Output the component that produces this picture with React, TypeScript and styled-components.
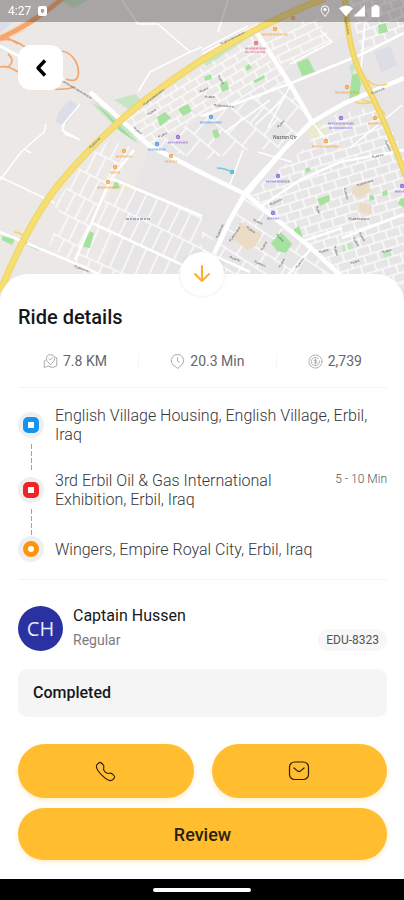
import React from "react";
import styled, { createGlobalStyle } from "styled-components";

const GlobalStyle = createGlobalStyle`
  *, *::before, *::after { box-sizing: border-box; }
  body {
    margin: 0;
    background: #fff;
    color: #16171b;
    font-family: Roboto, "Liberation Sans", sans-serif;
  }
  h1, h2, p, ul, ol { margin: 0; padding: 0; }
  ul, ol { list-style: none; }
  button { font-family: inherit; border: 0; padding: 0; cursor: pointer; }
`;

const Screen = styled.div`
  display: flex;
  flex-direction: column;
  min-height: 100vh;
`;

const Hero = styled.header`
  position: relative;
  height: 304px;
  overflow: hidden;
  background: #ebe8e6;
`;

const MapSvg = styled.svg`
  position: absolute;
  inset: 0;
  width: 100%;
  height: 100%;
`;

const StatusBar = styled.div`
  position: relative;
  display: flex;
  align-items: center;
  gap: 7px;
  height: 22px;
  padding: 0 24px 0 8px;
  background: rgba(70, 66, 68, 0.4);
  color: #fff;
  font-size: 12px;
`;

const StatusIcons = styled.div`
  display: flex;
  align-items: center;
  gap: 9px;
  margin-left: auto;
`;

const BackButton = styled.button`
  position: relative;
  display: grid;
  place-items: center;
  width: 45px;
  height: 45px;
  margin: 23px 18px 0;
  border-radius: 13px;
  background: #fff;
`;

const Sheet = styled.main`
  position: relative;
  flex: 1;
  display: flex;
  flex-direction: column;
  margin-top: -30px;
  padding: 31px 17px 19px 18px;
  border-radius: 28px 28px 0 0;
  background: #fff;
`;

const CollapseButton = styled.button`
  position: absolute;
  top: -22px;
  left: 50%;
  display: grid;
  place-items: center;
  width: 44px;
  height: 44px;
  margin-left: -22px;
  border-radius: 50%;
  background: #fff;
  box-shadow: 0 0 4px rgba(0, 0, 0, 0.09);
`;

const Title = styled.h1`
  font-size: 20px;
  line-height: 24px;
  font-weight: 500;
`;

const Stats = styled.ul`
  display: flex;
  align-items: center;
  justify-content: space-between;
  margin-top: 20px;
  padding: 0 25px 14px;
  border-bottom: 1px solid #f4f4f4;
`;

const Stat = styled.li`
  display: flex;
  align-items: center;
  gap: 5px;
  color: #66676a;
  font-size: 14px;
  line-height: 24px;
`;

const StatDivider = styled.li`
  width: 1px;
  height: 16px;
  background: #f6f6f6;
`;

const Route = styled.ol`
  padding: 18px 0 17px;
  border-bottom: 1px solid #f4f4f4;
`;

const Stop = styled.li`
  display: grid;
  grid-template-columns: 26px 1fr auto;
  column-gap: 11px;
  align-items: center;
`;

const tones = { blue: "#1593ef", red: "#ee2427", orange: "#fb950b" };

const Marker = styled.span<{ $tone: keyof typeof tones; $round?: boolean }>`
  display: grid;
  place-items: center;
  width: 26px;
  height: 26px;
  border-radius: 50%;
  background: #efeff0;
  &::before {
    content: "";
    width: 16px;
    height: 16px;
    border: 5px solid ${(p) => tones[p.$tone]};
    border-radius: ${(p) => (p.$round ? "50%" : "5px")};
    background: #fff;
  }
`;

const Address = styled.p`
  color: #35363a;
  font-size: 16px;
  line-height: 19px;
  font-weight: 300;
`;

const Wait = styled.span`
  align-self: start;
  padding-top: 1px;
  color: #55565a;
  font-size: 12px;
  line-height: 14px;
  font-weight: 300;
`;

const Connector = styled.span`
  justify-self: center;
  width: 1px;
  height: 27px;
  background: repeating-linear-gradient(#a2a2a4 0 5px, transparent 5px 7px);
`;

const Driver = styled.section`
  display: flex;
  align-items: center;
  gap: 10px;
  margin-top: 26px;
`;

const Avatar = styled.div`
  display: grid;
  place-items: center;
  width: 45px;
  height: 45px;
  border-radius: 50%;
  background: #2932a0;
  color: #e9eafb;
  font-family: "Open Sans", sans-serif;
  font-size: 20px;
`;

const DriverInfo = styled.div`
  flex: 1;
`;

const DriverName = styled.h2`
  font-size: 16px;
  line-height: 19px;
  font-weight: 400;
`;

const DriverRow = styled.div`
  display: flex;
  align-items: center;
  justify-content: space-between;
  height: 22px;
  margin-top: 4px;
  color: #7b7c7f;
  font-size: 14px;
`;

const Plate = styled.span`
  padding: 0 8px;
  border-radius: 11px;
  background: #f7f7f7;
  color: #535457;
  font-size: 12px;
  line-height: 22px;
`;

const State = styled.p`
  margin-top: 18px;
  padding: 0 15px;
  border-radius: 9px;
  background: #f5f5f5;
  font-size: 16px;
  line-height: 48px;
  font-weight: 500;
`;

const Actions = styled.div`
  display: grid;
  grid-template-columns: 1fr 1fr;
  gap: 10px 18px;
  margin-top: 27px;
`;

const ActionButton = styled.button<{ $wide?: boolean }>`
  display: grid;
  place-items: center;
  grid-column: ${(p) => (p.$wide ? "1 / -1" : "auto")};
  height: ${(p) => (p.$wide ? 52 : 54)}px;
  border-radius: 27px;
  background: #ffbd2f;
  color: #2c210d;
  box-shadow: 0 2px 5px rgba(255, 189, 47, 0.28);
  font-size: 18px;
  font-weight: 500;
`;

const NavBar = styled.footer`
  display: grid;
  place-items: center;
  height: 21px;
  background: #000;
  &::before {
    content: "";
    width: 98px;
    height: 4px;
    border-radius: 2px;
    background: #fff;
  }
`;

/* Neighbourhoods: an outline filled with a rotated street pattern. */
const blocks = [
  { id: "a", w: 15, h: 8, rot: -31, d: "M138 108 252 36 290 86 202 116 150 146 124 118Z" },
  { id: "b", w: 11, h: 23, rot: 27, d: "M86 158 110 140 132 148 92 222 74 264 49 246 60 212 54 206Z" },
  { id: "c", w: 12, h: 27, rot: 26, d: "M114 181 202 217 202 275 92 223Z" },
  { id: "d", w: 13, h: 40, rot: 24, d: "M92 223 202 275 76 275 76 260Z" },
  { id: "e", w: 14, h: 9, rot: -17, d: "M300 152 330 116 375 105 404 150 404 285 342 275 250 193Z" },
  { id: "f", w: 18, h: 22, rot: 40, d: "M150 146 202 116 290 86 312 122 285 148 250 150 202 160Z" },
  { id: "g", w: 24, h: 17, rot: 33, d: "M246 196 342 280 212 280 215 252Z" },
  { id: "h", w: 24, h: 8, rot: -25, d: "M262 38 315 14 333 42 285 70Z" },
  { id: "i", w: 12, h: 9, rot: -20, d: "M350 0 404 0 404 32 360 52Z" },
  { id: "j", w: 22, h: 30, rot: 32, d: "M202 220 215 225 212 252 202 250Z" },
];

const parks = [
  "M157 117 165 112 171 118 160 126Z", "M178 109 188 104 192 111 183 116Z",
  "M297 63 308 58 315 72 302 76Z", "M245 67 249 64 252 68 247 71Z",
  "M352 75 358 73 361 83 359 96 349 100Z", "M378 25 386 23 388 32 379 34Z",
  "M212 131 217 129 220 136 215 139Z", "M220 84 227 81 229 89 222 92Z",
  "M204 77 211 74 212 79 205 81Z", "M253 81 264 75 265 78 255 83Z",
  "M271 243 281 232 292 244 286 253 277 251Z", "M317 199 329 195 330 201 320 206Z",
  "M293 230 299 226 303 238 296 234Z", "M305 169 309 167 311 171 306 173Z",
  "M369 196 373 195 375 199 370 201Z", "M382 192 387 190 388 195 383 196Z",
  "M400 199 404 198 404 208 398 204Z", "M85 240 89 231 94 233 90 248 83 247Z",
  "M114 183 117 180 120 188 113 189Z", "M2 236 15 239 12 245 2 240Z",
];

const palePark = [
  "M114 100 135 94 145 104 133 112Z", "M60 0 88 0 74 8Z",
  "M342 246 352 242 354 250 343 253Z", "M383 252 392 249 394 257 384 260Z",
  "M355 68 353 63 349 67 352 75Z", "M90 102 122 118 138 143 121 132Z",
  "M202 57 262 26 255 34 206 66Z", "M22 243 42 247 38 251Z",
];

const outline =
  "M0 177 55 203M0 180 22 151 44 132 46 124M24 149 31 153M65 123 62 130 80 140M80 104 62 126 65 134 78 139M122 0 138 24 158 24 190 52 202 47M190 52 150 72 138 92M202 54 258 24M202 50 248 26M270 100 225 132M290 86 268 128M312 122 325 138M320 30 332 42 290 64M402 105 350 148M285 98 255 125M228 0 218 32M365 20 361 70M243 150 230 184M258 152 292 162";

const pois: [number, number, string, number][] = [
  [293, 18, "#f7a94b", 0], [275, 29, "#f7a94b", 26], [256, 43, "#e56f82", 22], [347, 87, "#f4a64b", 24],
  [375, 118, "#f4a64b", 14], [326, 141, "#f4a64b", 28], [341, 118, "#8b72e5", 26],
  [211, 117, "#5b9ee8", 22], [178, 137, "#9c6ce3", 20], [157, 144, "#5b9ee8", 18],
  [171, 156, "#f7a94b", 12], [124, 151, "#f7a94b", 16], [115, 167, "#f7a94b", 10],
  [108, 182, "#f7a94b", 22], [278, 176, "#8b72e5", 24], [273, 213, "#8b72e5", 12],
  [232, 172, "#42b8c8", 0], [402, 186, "#8b72e5", 14],
];

const streetNames: [number, number, number, number][] = [
  [154, 97, 26, -37], [233, 38, 27, -26], [347, 26, 18, 80], [378, 91, 14, -22],
  [95, 143, 14, -44], [82, 269, 16, 20], [76, 89, 36, 31], [152, 112, 10, -32],
  [138, 131, 10, 38], [163, 135, 10, -25], [204, 90, 9, -25], [210, 97, 10, 0],
  [224, 106, 20, 5], [221, 80, 10, 60], [281, 124, 9, -45], [276, 202, 13, -25],
  [220, 231, 15, -66], [346, 194, 12, 75], [365, 183, 17, -17], [378, 156, 12, -12],
  [235, 234, 18, -55], [258, 222, 10, 25], [251, 230, 10, 35], [264, 246, 10, -60],
  [235, 259, 11, 20], [280, 238, 10, 48], [282, 263, 10, -60],
  [260, 264, 12, 25], [300, 263, 12, -52], [324, 251, 10, -15],
  [336, 251, 10, 75], [356, 242, 10, 60], [362, 237, 10, 60], [359, 219, 20, 0],
  [387, 251, 10, -14], [355, 262, 9, -18], [318, 210, 8, 70],
  [388, 146, 12, 66],
];

const CityMap = () => (
  <MapSvg viewBox="0 0 404 304" preserveAspectRatio="xMidYMin slice" aria-hidden="true" fill="none">
    <defs>
      {blocks.map((b) => (
        <pattern key={b.id} id={`streets-${b.id}`} width={b.w} height={b.h * 2} patternUnits="userSpaceOnUse" patternTransform={`rotate(${b.rot})`}>
          <path
            d={`M0 0H${b.w}M0 ${b.h}H${b.w}M0 ${b.h * 2}H${b.w}M1 0V${b.h}M${b.w / 2} ${b.h}V${b.h * 2}`}
            stroke="#fbfbfb"
            strokeWidth="1.6"
          />
        </pattern>
      ))}
    </defs>
    <path d="M0 0H404V304H0Z" fill="#ebe8e6" />
    <path d="M100 275 150 148 404 0V304H80Z" fill="#e7e5e5" />
    <path d="M60 110 70 100 79 106 65 126 55 122ZM374 52 390 46 397 65 381 72ZM0 22 12 22 0 34Z" fill="#dcdde7" />
    <path d="M308 127 320 122 328 130 318 142 308 138ZM122 181 131 185 127 192 118 188ZM292 38 304 35 300 41Z" fill="#e9ead0" />
    {palePark.map((d) => <path key={d} d={d} fill="#c5e5c4" />)}
    {blocks.map((b) => <path key={b.id} d={b.d} fill={`url(#streets-${b.id})`} />)}
    <path d="M240 222 262 234 256 246 247 250 234 239ZM353 187 367 182 371 191 360 198 352 194ZM360 202 372 206 371 214 358 212Z" fill="#ecdcc5" />
    {parks.map((d) => <path key={d} d={d} fill="#a4e29d" />)}
    <g stroke="#fff" strokeLinejoin="round">
      <path d={outline} strokeWidth="1.6" />
      <path d="M0 46 64 80M0 232 84 267 104 277M110 178 202 216M92 223 202 274M134 150 110 180 92 222 75 260M120 118 150 148M202 250 250 272M342 238 404 214M300 242 342 228M404 33 360 55 294 82 202 116M285 150 268 170 246 196M404 150 340 162 300 180 262 206M310 250 285 278" strokeWidth="2.6" />
      <path d="M90 92 150 146 202 173 247 195 310 247 342 277M255 30 290 84 312 122M404 78 345 103 312 122 285 148 247 190 230 220 214 254" strokeWidth="4.6" />
    </g>
    <path d="M92 99 136 142 120 131Z" fill="#9ddd9f" />
    <g stroke="#f5a66d">
      <path d="M-2 39Q30 26 63 -2" strokeWidth="5" />
      <path d="M-2 36Q28 22 56 0M0 42 27 29" stroke="#ffd0a8" strokeWidth="1" />
      <path d="M0 40Q12 37 25 47M6 37 18 44M62 51C74 53 80 66 78 76Q76 83 66 79M75 87Q65 90 55 89M0 67Q8 65 18 72M8 54Q16 61 8 67" strokeWidth="1.7" />
    </g>
    <g stroke="#f0d468">
      <path d="M325 -2Q260 24 202 60 150 94 120 121 85 152 59 184 28 223 0 292" strokeWidth="7" />
      <path d="M345 -2Q348 53 364 80 386 122 406 177" strokeWidth="6" />
      <path d="M368 80Q374 88 387 84M362 100Q376 102 385 114M355 102Q364 105 373 102M14 232Q24 232 27 244" strokeWidth="1.4" />
    </g>
    <g stroke="#f6df72" strokeWidth="5">
      <path d="M325 -2Q260 24 202 60 150 94 120 121 85 152 59 184 28 223 0 292" />
      <path d="M345 -2Q348 53 364 80 386 122 406 177" strokeWidth="2" />
    </g>
    <g stroke="#77787a" strokeWidth="1.8" strokeDasharray="2 .6 1 .4 3 .6" opacity=".6">
      {streetNames.map(([x, y, w, r]) => (
        <path key={`${x}-${y}`} d={`M${-w / 2} 0q1-1 2 0t2 0H${w / 2}`} transform={`translate(${x} ${y}) rotate(${r})`} />
      ))}
    </g>
    {pois.map(([x, y, c, w]) => (
      <g key={`${x}-${y}`}>
        <circle cx={x} cy={y} r="2.2" fill={c} />
        <circle cx={x} cy={y} r=".6" fill="#fff" />
        {w > 0 && <path d={`M${x - w / 2} ${y + 5.5}h${w}`} stroke={c} strokeWidth="1.8" strokeDasharray="3 .5 2 .4 1 .4" opacity=".6" />}
      </g>
    ))}
    <path d="M245 52h20" stroke="#e56f82" strokeWidth="1.6" strokeDasharray="3 .5 2 .4" opacity=".6" />
    <path d="M329 128h24" stroke="#8b72e5" strokeWidth="1.6" strokeDasharray="3 .5 2 .4" opacity=".6" />
    <path d="M126 219h24" stroke="#9a9db2" strokeWidth="2" strokeDasharray="3 1 2 1" opacity=".8" />
    <path d="M217 168Q224 168 232 172" stroke="#72cbd6" strokeWidth="1.5" />
    <text x="273" y="139" fill="#55565a" fontSize="5" fontFamily="Roboto, sans-serif">Nazran Qtr</text>
  </MapSvg>
);

const MapPinIcon = () => (
  <svg width="15" height="15" viewBox="0 0 24 24" fill="none" stroke="#aaabad" strokeWidth="1.6" strokeLinecap="round" strokeLinejoin="round" aria-hidden="true">
    <path d="M12 17C8 13 5.5 11 5.5 7.5a6.5 6.5 0 0 1 13 0C18.500 11 16 13 12 17Z" />
    <path d="m9.500 7.500 1.800 1.800L15 6M4 10 2 11v11l6-3 7 3 7-3V6l-2-1" />
  </svg>
);

const TimeIcon = () => (
  <svg width="15" height="15" viewBox="0 0 24 24" fill="none" stroke="#aaabad" strokeWidth="1.6" strokeLinecap="round" strokeLinejoin="round" aria-hidden="true">
    <path d="M12 23 8.500 20A10 10 0 1 1 15.500 20Z" />
    <path d="M12 6v5.500l3 1.500" />
  </svg>
);

const CoinIcon = () => (
  <svg width="15" height="15" viewBox="0 0 24 24" fill="none" stroke="#aaabad" strokeWidth="1.5" strokeLinecap="round" aria-hidden="true">
    <circle cx="12" cy="12" r="10.500" />
    <path d="M16.500 7.200A6.600 6.600 0 1 0 18.500 11" />
    <path d="M14.200 10c-.5-1-4.200-1.300-4.200.5 0 2 4.300 1 4.300 3 0 1.700-3.800 1.500-4.500.3M12 8v8" />
  </svg>
);

const PhoneIcon = () => (
  <svg width="23" height="23" viewBox="0 0 24 24" fill="none" stroke="currentColor" strokeWidth="1.2" strokeLinejoin="round" aria-hidden="true">
    <path d="M11.532 12.472C15.521 16.460 16.426 11.847 18.966 14.385C21.414 16.833 22.822 17.323 19.719 20.425C19.331 20.737 16.862 24.494 8.185 15.820C-.493 7.144 3.262 4.672 3.574 4.284C6.684 1.174 7.166 2.589 9.614 5.037C12.154 7.577 7.543 8.484 11.532 12.472Z" />
  </svg>
);

const MailIcon = () => (
  <svg width="22" height="20" viewBox="0 0 22 20" fill="none" stroke="currentColor" strokeWidth="1.2" strokeLinecap="round" strokeLinejoin="round" aria-hidden="true">
    <rect x="1.500" y="1" width="19" height="17.500" rx="5" />
    <path d="m6 7 3.700 3.100q1.300 1 2.600 0L16 7" />
  </svg>
);

const LocationIcon = () => (
  <svg width="10" height="12" viewBox="0 0 10 12" aria-hidden="true">
    <path d="M5 11.500C2.500 8.500 1.200 6.500 1.200 4.600a3.800 3.800 0 0 1 7.600 0C8.800 6.500 7.500 8.500 5 11.500Z" fill="none" stroke="#fff" />
    <circle cx="5" cy="4.600" r="1.500" fill="#fff" />
  </svg>
);

const SignalIcons = () => (
  <svg width="41" height="12" viewBox="0 0 41 12" fill="#fff" aria-hidden="true">
    <path d="M0 3.300Q7-2.300 14 3.300L7 11.500Z" />
    <path d="M26 0V11.500H14.500Z" />
    <path d="M33 1.500h2V0h4v1.500h1.500V12H32.500V1.500Z" />
  </svg>
);

export default function App() {
  return (
    <>
      <GlobalStyle />
      <Screen>
        <Hero>
          <CityMap />
          <StatusBar>
            <span>4:27</span>
            <svg width="9" height="10" viewBox="0 0 9 10" aria-hidden="true">
              <rect width="9" height="10" rx="2" fill="#fff" />
              <path d="M3 3h2.500l1 2-2 2.500L3 6Z" fill="#a5a0a0" />
            </svg>
            <StatusIcons>
              <LocationIcon />
              <SignalIcons />
            </StatusIcons>
          </StatusBar>
          <BackButton aria-label="Back">
            <svg width="14" height="18" viewBox="0 0 14 18" fill="none" stroke="#000" strokeWidth="3.400" strokeLinejoin="round" aria-hidden="true">
              <path d="M11 1.500 4 9l7 7.500" />
            </svg>
          </BackButton>
        </Hero>

        <Sheet>
          <CollapseButton aria-label="Collapse details">
            <svg width="18" height="20" viewBox="0 0 18 20" fill="none" stroke="#fbb02d" strokeWidth="2" strokeLinecap="round" strokeLinejoin="round" aria-hidden="true">
              <path d="M9 2v15M2 10l7 7 7-7" />
            </svg>
          </CollapseButton>
          <Title>Ride details</Title>
          <Stats>
            <Stat><MapPinIcon />7.8 KM</Stat>
            <StatDivider aria-hidden="true" />
            <Stat><TimeIcon />20.3 Min</Stat>
            <StatDivider aria-hidden="true" />
            <Stat><CoinIcon />2,739</Stat>
          </Stats>

          <Route>
            <Stop>
              <Marker $tone="blue" />
              <Address>English Village Housing, English Village, Erbil, Iraq</Address>
              <span />
              <Connector />
            </Stop>
            <Stop>
              <Marker $tone="red" />
              <Address>3rd Erbil Oil &amp; Gas International Exhibition, Erbil, Iraq</Address>
              <Wait>5 - 10 Min</Wait>
              <Connector />
            </Stop>
            <Stop>
              <Marker $tone="orange" $round />
              <Address>Wingers, Empire Royal City, Erbil, Iraq</Address>
            </Stop>
          </Route>

          <Driver>
            <Avatar>CH</Avatar>
            <DriverInfo>
              <DriverName>Captain Hussen</DriverName>
              <DriverRow>
                <span>Regular</span>
                <Plate>EDU-8323</Plate>
              </DriverRow>
            </DriverInfo>
          </Driver>
          <State>Completed</State>

          <Actions>
            <ActionButton aria-label="Call captain"><PhoneIcon /></ActionButton>
            <ActionButton aria-label="Message captain"><MailIcon /></ActionButton>
            <ActionButton $wide>Review</ActionButton>
          </Actions>
        </Sheet>
        <NavBar />
      </Screen>
    </>
  );
}
